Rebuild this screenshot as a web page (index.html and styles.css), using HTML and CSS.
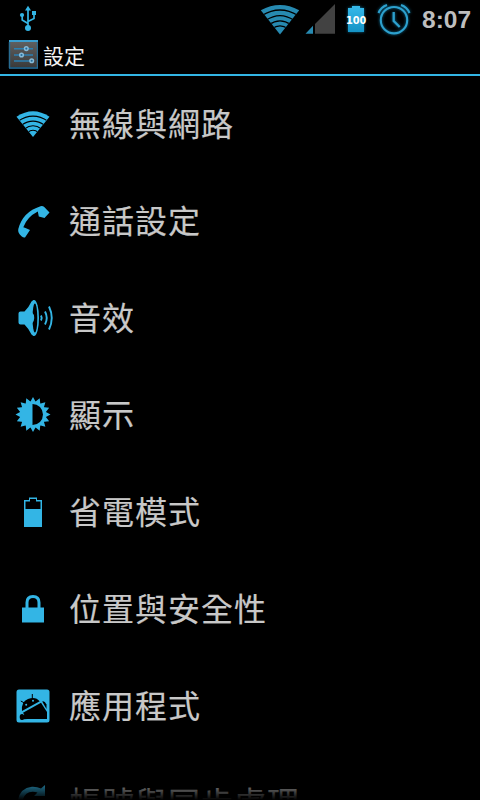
FILE: index.html
```html
<!DOCTYPE html>
<html lang="zh-Hant">
<head>
<meta charset="utf-8">
<title>設定</title>
<link rel="stylesheet" href="styles.css">
</head>
<body>
<div class="screen">
  <header class="status">
    <svg class="usb" width="20" height="38" viewBox="18 0 20 38" fill="none" stroke="#33b5e5" stroke-width="1.7">
      <path d="M28 27V9M28 23.500L22.200 20V16M28 21.500L34 18.500V14"/>
      <path fill="#33b5e5" stroke="none" d="M25 10.500L28 5.800L31 10.500zM32 11h4v4h-4z"/>
      <circle cx="28" cy="28" r="3" fill="#33b5e5" stroke="none"/>
      <circle cx="22" cy="15" r="2.100" fill="#33b5e5" stroke="none"/>
    </svg>
    <div class="tray">
      <svg class="glow" width="155" height="38" viewBox="258 0 155 38">
        <clipPath id="fan"><path d="M280 34.500L260.500 10Q280 -1 299.500 10z"/></clipPath>
        <path fill="#278ab1" d="M280 34.500L260.800 10.200Q280 -.2 299.200 10.200z"/>
        <g clip-path="url(#fan)" fill="none" stroke="#000" stroke-width="1.300">
          <path d="M262 15.500Q280 4.500 298 15.500M266 20.300Q280 11 294 20.300M269 24.600Q280 17 291 24.600M272 28.800Q280 23 288 28.800"/>
        </g>
        <path fill="#424242" d="M335 4v29.700h-20V24z"/>
        <path fill="#278ab1" d="M313 25.800v7.900h-7.500z"/>
        <defs><linearGradient id="cell" x2="0" y2="1"><stop stop-color="#36b9ea"/><stop offset="1" stop-color="#1593c5"/></linearGradient></defs>
        <path class="halo" fill="url(#cell)" d="M348 8h4V6h8v2h4v24h-16z"/>
        <text class="level" x="356.200" y="24" text-anchor="middle" textLength="20.500" lengthAdjust="spacingAndGlyphs">100</text>
        <g class="halo" fill="none" stroke="#2da0cd" stroke-width="2.100">
          <circle cx="394" cy="20.200" r="13.200"/>
          <path d="M393.700 12v9l6 6" stroke-width="2.300"/>
          <path d="M378.500 13Q381 7 387 5M409.500 13Q407 7 401 5"/>
        </g>
      </svg>
      <span class="clock">8:07</span>
    </div>
  </header>
  <div class="titlebar">
    <svg width="30" height="31" viewBox="8 39 30 31">
      <defs><linearGradient id="panel" x2="0" y2="1"><stop stop-color="#626262"/><stop offset="1" stop-color="#383838"/></linearGradient></defs>
      <rect x="9" y="40" width="29" height="29" rx="1" fill="url(#panel)"/>
      <path fill="#3b9fd0" d="M9 40h29v2H9z"/>
      <path fill="#1e587c" d="M9 67h29v2H9z"/>
      <path stroke="#286b91" stroke-width="1.500" d="M9.500 42v26M37.500 42v26"/>
      <path stroke="#2c80b2" stroke-width="1.500" d="M14 48.800h19M14 55h19M14 61h19"/>
      <g fill="#256c98" stroke="#86bbd9" stroke-width="1.500"><circle cx="26.300" cy="48.600" r="1.800"/><circle cx="21.500" cy="55" r="1.800"/><circle cx="31.700" cy="60.800" r="1.800"/></g>
    </svg>
    <h1>設定</h1>
  </div>
  <ul class="list">
    <li>
      <svg viewBox="13 104 44 41">
        <clipPath id="fan2"><path d="M33 137L16 115.500Q33 106 50 115.500z"/></clipPath>
        <path d="M33 137L16.500 116.800Q33 105.800 49.500 116.800z"/>
        <g clip-path="url(#fan2)" fill="none" stroke="#000" stroke-width="1.100"><path d="M18 121.300Q33 111 48 121.300M21.500 125.200Q33 117 44.500 125.200M24.500 129Q33 122.500 41.500 129M27.500 132.600Q33 128 38.500 132.600"/></g>
      </svg>
      <span>無線與網路</span>
    </li>
    <li>
      <svg viewBox="13 201 44 41"><path d="M40.500 206.200Q42.500 205.600 44 206.700L49.500 212.500L44.500 218L38.800 216.400L37.800 211.500Q27 217 23.300 227.300L25.500 228L30 230L25 237.500Q23.500 238 21.500 236.200Q17.500 233 18.300 229Q22.500 212 40.500 206.200z"/></svg>
      <span>通話設定</span>
    </li>
    <li>
      <svg viewBox="13 298 44 41">
        <ellipse cx="34" cy="318" rx="5" ry="18"/>
        <path d="M18.500 313.500Q18.500 311.500 20.500 311.500H24.500Q29 307 31.500 301.500L34 300.200V335.800L31.500 334.500Q29 329 24.500 324.500H20.500Q18.500 324.500 18.500 322.500z"/>
        <ellipse cx="34.900" cy="318" rx="2.400" ry="14.500" fill="#000"/>
        <path d="M32 312.500Q34.200 314 34.200 318T32 323.500z"/>
        <g fill="none" stroke="#33b5e5" stroke-width="1.900"><path d="M41 315.500Q42.400 318 41 320.500M45 311.500Q48.500 318 45 324.500M49 306.500Q54.500 318 49 329.500"/></g>
      </svg>
      <span>音效</span>
    </li>
    <li>
      <svg viewBox="13 395 44 41">
        <defs><path id="rays" d="M29.700 403L33 397L36.300 403zM29.700 426L33 432L36.300 426zM21.500 411.200L15.500 414.500L21.500 417.800zM44.500 411.200L50.500 414.500L44.500 417.800z"/></defs>
        <use href="#rays"/>
        <use href="#rays" transform="rotate(22.500 33 414.500)"/>
        <use href="#rays" transform="rotate(45 33 414.500)"/>
        <use href="#rays" transform="rotate(67.500 33 414.500)"/>
        <circle cx="33" cy="414.500" r="13"/>
        <path fill="#000" d="M32.500 404A10.500 10.500 0 0 1 32.500 425z"/>
      </svg>
      <span>顯示</span>
    </li>
    <li>
      <svg viewBox="13 492 44 41"><path fill-rule="evenodd" d="M24 500h5v-2.500h8v2.500h5v27H24zM25.500 501.500v7.500h15v-7.500H36v-2.500h-6v2.500z"/></svg>
      <span>省電模式</span>
    </li>
    <li>
      <svg viewBox="13 589 44 41"><path d="M22 607.500h22V622.500H22z"/><path fill="none" stroke="#33b5e5" stroke-width="3" d="M27 608V602.500Q27 596.500 33 596.500T39 602.500V608"/></svg>
      <span>位置與安全性</span>
    </li>
    <li>
      <svg viewBox="13 686 44 41">
        <rect x="16.500" y="689.500" width="33" height="33" rx="2.500"/>
        <g fill="#000">
          <path d="M22 711Q21 701.500 28 699Q35.500 696 39.700 701.300z"/>
          <path d="M23 712.800L41 702.800L47 712V719H27z"/>
          <path d="M42.200 701.500Q44.500 700.500 46.500 704.500V709z"/>
          <ellipse cx="22" cy="717" rx="2.300" ry="3"/>
          <path d="M20.500 719.500L27.500 719L25 714z"/>
        </g>
        <path stroke="#000" d="M32.300 694V699M20.800 701L24.500 703"/>
        <circle cx="26.200" cy="704.800" r="1"/><circle cx="33" cy="700.800" r="1"/>
      </svg>
      <span>應用程式</span>
    </li>
    <li>
      <svg viewBox="13 783 44 41"><path d="M18 800Q20 788 32 786.700Q37 786.500 41 788.500L45 785V796H34L37.500 792.500Q26 789.500 22.500 800z"/></svg>
      <span>帳號與同步處理</span>
    </li>
  </ul>
  <div class="fade"></div>
</div>
</body>
</html>
```

FILE: styles.css
```css
* { box-sizing: border-box; }

body {
  margin: 0;
  background: #000;
  font-family: "Noto Sans CJK TC", "Liberation Sans", sans-serif;
}

.screen {
  position: relative;
  width: 480px;
  height: 800px;
  overflow: hidden;
  background: #000;
}

.status {
  display: flex;
  justify-content: space-between;
  height: 38px;
  padding: 0 9px 0 18px;
}

.tray { display: flex; }

.halo { filter: drop-shadow(0 0 1.5px #0b6d95); }

.level {
  fill: #fff;
  font: bold 11px "DejaVu Sans", sans-serif;
}

.clock {
  width: 58px;
  padding-left: 9px;
  color: #bebebe;
  font: bold 24.5px/40px "Liberation Sans", sans-serif;
  white-space: nowrap;
}

.titlebar {
  display: flex;
  height: 38px;
  padding: 1px 0 0 8px;
  border-bottom: 2px solid #33b5e5;
}

.titlebar h1 {
  margin: 0 0 0 5px;
  color: #f3f3f3;
  font-size: 21px;
  font-weight: 400;
  line-height: 32px;
}

.list {
  margin: 0;
  padding: 0;
  list-style: none;
}

.list li {
  display: flex;
  align-items: flex-start;
  height: 97px;
  padding: 28px 0 0 13px;
}

.list svg {
  flex: none;
  width: 44px;
  height: 41px;
  fill: #33b5e5;
}

.list span {
  margin-left: 12px;
  color: #c8c8c8;
  font-size: 32px;
  letter-spacing: 1px;
  line-height: 37px;
  white-space: nowrap;
  -webkit-text-stroke: 0.2px #c8c8c8;
}

.fade {
  position: absolute;
  right: 0;
  bottom: 0;
  left: 0;
  height: 25px;
  background: linear-gradient(transparent, #000);
}
```
